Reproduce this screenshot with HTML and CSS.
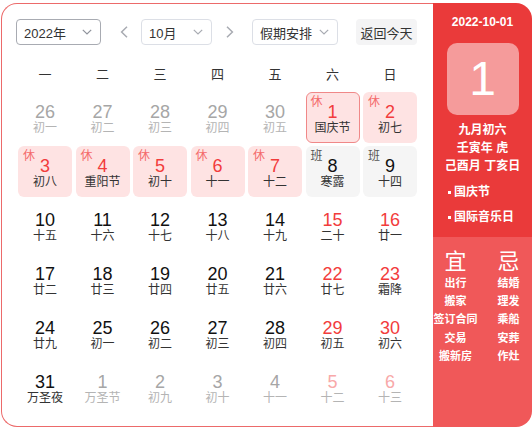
FILE: index.html
```html
<!DOCTYPE html>
<html lang="zh-CN">
<head>
<meta charset="utf-8">
<title>万年历</title>
<link rel="stylesheet" href="styles.css">
</head>
<body>
<div class="cal">
  <div class="main">
    <div class="toolbar">
      <div class="select year"><span>2022年</span><svg width="10" height="6" viewBox="0 0 10 6"><path d="M0.8 0.8L5 5 9.2 0.8" fill="none" stroke="#8f939c" stroke-width="1.2"/></svg></div>
      <div class="nav prev"><svg width="8" height="12" viewBox="0 0 8 12"><path d="M7 0.8L1.6 6 7 11.2" fill="none" stroke="#a8abb2" stroke-width="1.5"/></svg></div>
      <div class="select month"><span>10月</span><svg width="10" height="6" viewBox="0 0 10 6"><path d="M0.8 0.8L5 5 9.2 0.8" fill="none" stroke="#a8abb2" stroke-width="1.2"/></svg></div>
      <div class="nav next"><svg width="8" height="12" viewBox="0 0 8 12"><path d="M1 0.8L6.4 6 1 11.2" fill="none" stroke="#a8abb2" stroke-width="1.5"/></svg></div>
      <div class="select holiday"><span>假期安排</span><svg width="10" height="6" viewBox="0 0 10 6"><path d="M0.8 0.8L5 5 9.2 0.8" fill="none" stroke="#a8abb2" stroke-width="1.2"/></svg></div>
      <div class="btn">返回今天</div>
    </div>
    <div class="weekdays">
      <span>一</span><span>二</span><span>三</span><span>四</span><span>五</span><span>六</span><span>日</span>
    </div>
    <div class="grid">
      <div class="cell other"><span class="num">26</span><span class="lunar">初一</span></div>
      <div class="cell other"><span class="num">27</span><span class="lunar">初二</span></div>
      <div class="cell other"><span class="num">28</span><span class="lunar">初三</span></div>
      <div class="cell other"><span class="num">29</span><span class="lunar">初四</span></div>
      <div class="cell other"><span class="num">30</span><span class="lunar">初五</span></div>
      <div class="cell rest selected"><span class="tag">休</span><span class="num">1</span><span class="lunar">国庆节</span></div>
      <div class="cell rest"><span class="tag">休</span><span class="num">2</span><span class="lunar">初七</span></div>

      <div class="cell rest"><span class="tag">休</span><span class="num">3</span><span class="lunar">初八</span></div>
      <div class="cell rest"><span class="tag">休</span><span class="num">4</span><span class="lunar">重阳节</span></div>
      <div class="cell rest"><span class="tag">休</span><span class="num">5</span><span class="lunar">初十</span></div>
      <div class="cell rest"><span class="tag">休</span><span class="num">6</span><span class="lunar">十一</span></div>
      <div class="cell rest"><span class="tag">休</span><span class="num">7</span><span class="lunar">十二</span></div>
      <div class="cell work"><span class="tag">班</span><span class="num">8</span><span class="lunar">寒露</span></div>
      <div class="cell work"><span class="tag">班</span><span class="num">9</span><span class="lunar">十四</span></div>

      <div class="cell"><span class="num">10</span><span class="lunar">十五</span></div>
      <div class="cell"><span class="num">11</span><span class="lunar">十六</span></div>
      <div class="cell"><span class="num">12</span><span class="lunar">十七</span></div>
      <div class="cell"><span class="num">13</span><span class="lunar">十八</span></div>
      <div class="cell"><span class="num">14</span><span class="lunar">十九</span></div>
      <div class="cell weekend"><span class="num">15</span><span class="lunar">二十</span></div>
      <div class="cell weekend"><span class="num">16</span><span class="lunar">廿一</span></div>

      <div class="cell"><span class="num">17</span><span class="lunar">廿二</span></div>
      <div class="cell"><span class="num">18</span><span class="lunar">廿三</span></div>
      <div class="cell"><span class="num">19</span><span class="lunar">廿四</span></div>
      <div class="cell"><span class="num">20</span><span class="lunar">廿五</span></div>
      <div class="cell"><span class="num">21</span><span class="lunar">廿六</span></div>
      <div class="cell weekend"><span class="num">22</span><span class="lunar">廿七</span></div>
      <div class="cell weekend"><span class="num">23</span><span class="lunar">霜降</span></div>

      <div class="cell"><span class="num">24</span><span class="lunar">廿九</span></div>
      <div class="cell"><span class="num">25</span><span class="lunar">初一</span></div>
      <div class="cell"><span class="num">26</span><span class="lunar">初二</span></div>
      <div class="cell"><span class="num">27</span><span class="lunar">初三</span></div>
      <div class="cell"><span class="num">28</span><span class="lunar">初四</span></div>
      <div class="cell weekend"><span class="num">29</span><span class="lunar">初五</span></div>
      <div class="cell weekend"><span class="num">30</span><span class="lunar">初六</span></div>

      <div class="cell"><span class="num">31</span><span class="lunar">万圣夜</span></div>
      <div class="cell other"><span class="num">1</span><span class="lunar">万圣节</span></div>
      <div class="cell other"><span class="num">2</span><span class="lunar">初九</span></div>
      <div class="cell other"><span class="num">3</span><span class="lunar">初十</span></div>
      <div class="cell other"><span class="num">4</span><span class="lunar">十一</span></div>
      <div class="cell other weekend"><span class="num">5</span><span class="lunar">十二</span></div>
      <div class="cell other weekend"><span class="num">6</span><span class="lunar">十三</span></div>
    </div>
  </div>
  <div class="side">
    <div class="side-top">
      <div class="date">2022-10-01</div>
      <div class="day-box">1</div>
      <div class="lunar-info">
        <div>九月初六</div>
        <div>壬寅年 虎</div>
        <div>己酉月 丁亥日</div>
      </div>
      <ul class="festivals">
        <li>国庆节</li>
        <li>国际音乐日</li>
      </ul>
    </div>
    <div class="side-bottom">
      <div class="col">
        <div class="big">宜</div>
        <div>出行</div>
        <div>搬家</div>
        <div>签订合同</div>
        <div>交易</div>
        <div>搬新房</div>
      </div>
      <div class="col">
        <div class="big">忌</div>
        <div>结婚</div>
        <div>理发</div>
        <div>乘船</div>
        <div>安葬</div>
        <div>作灶</div>
      </div>
    </div>
  </div>
</div>
</body>
</html>
```

FILE: styles.css
```css
body {
  margin: 0;
  padding: 3px 0 0 1px;
  font-family: "Liberation Sans", "Noto Sans CJK SC", sans-serif;
  background: #fff;
}

.cal {
  display: flex;
  width: 531px;
  height: 424px;
}

.main {
  width: 432px;
  box-sizing: border-box;
  border: 1px solid #ec6a6a;
  border-right: none;
  border-radius: 16px 0 0 16px;
  padding: 15px 0 0 14px;
}

.toolbar {
  display: flex;
  align-items: center;
  height: 26px;
}

.select {
  box-sizing: border-box;
  height: 26px;
  border: 1px solid #dcdfe6;
  border-radius: 4px;
  display: flex;
  align-items: center;
  justify-content: space-between;
  padding: 0 8px 0 7px;
  font-size: 13px;
  color: #333;
}

.select.year {
  width: 85px;
  border-color: #a8abb2;
}

.select.month {
  width: 71px;
}

.select.holiday {
  width: 86px;
}

.nav {
  display: flex;
  align-items: center;
  height: 26px;
}

.nav.prev {
  margin: 0 13px 0 19px;
}

.nav.next {
  margin: 0 18px 0 14px;
}

.btn {
  margin-left: 18px;
  width: 61px;
  height: 26px;
  border-radius: 4px;
  background: #f4f4f5;
  color: #333;
  font-size: 13px;
  display: flex;
  align-items: center;
  justify-content: center;
}

.weekdays {
  display: grid;
  grid-template-columns: repeat(7, 54px);
  column-gap: 3.5px;
  margin: 10px 0 0 2px;
  height: 37px;
  align-items: center;
  justify-items: center;
  font-size: 13px;
  color: #333;
}

.grid {
  display: grid;
  grid-template-columns: repeat(7, 54px);
  grid-auto-rows: 51px;
  column-gap: 3.5px;
  row-gap: 3px;
  margin-left: 2px;
}

.cell {
  position: relative;
  box-sizing: border-box;
  border-radius: 6px;
  display: flex;
  flex-direction: column;
  align-items: center;
  padding-top: 10px;
}

.num {
  font-size: 18px;
  line-height: 20px;
  color: #111;
}

.lunar {
  font-size: 12px;
  line-height: 14px;
  margin-top: -1px;
  color: #333;
}

.tag {
  position: absolute;
  left: 5px;
  top: 4px;
  font-size: 12px;
  line-height: 12px;
}

.weekend .num {
  color: #f23c3c;
}

.rest {
  background: #fee3e3;
}

.rest .num {
  color: #f23c3c;
}

.rest .tag {
  color: #f46a6a;
}

.selected {
  border: 1px solid #f08888;
  padding-top: 9px;
}

.selected .tag {
  left: 4px;
  top: 3px;
}

.work {
  background: #f5f5f5;
}

.work .tag {
  color: #555;
}

.other .num {
  color: #a6a6a6;
}

.other .lunar {
  color: #b4b4b4;
}

.other.weekend .num {
  color: #f8a9a9;
}

/* side panel */
.side {
  width: 99px;
  border-radius: 0 16px 16px 0;
  overflow: hidden;
  display: flex;
  flex-direction: column;
  color: #fff;
}

.side-top {
  background: #ea3a3a;
  height: 234px;
  box-sizing: border-box;
  padding-top: 12px;
  display: flex;
  flex-direction: column;
  align-items: center;
}

.date {
  font-size: 12px;
  line-height: 14px;
  font-weight: bold;
}

.day-box {
  margin-top: 14px;
  width: 72px;
  height: 72px;
  border-radius: 10px;
  background: #f59b9b;
  font-size: 48px;
  line-height: 72px;
  text-align: center;
}

.lunar-info {
  margin-top: 6px;
  font-size: 12px;
  line-height: 18px;
  font-weight: bold;
  text-align: center;
}

.festivals {
  list-style: none;
  margin: 5px 0 0 0;
  padding: 0 0 0 14px;
  align-self: stretch;
  font-size: 12px;
  line-height: 25px;
  font-weight: bold;
}

.festivals li {
  display: flex;
  align-items: center;
}

.festivals li::before {
  content: "";
  width: 3px;
  height: 3px;
  background: #fff;
  margin: 0 3px 0 1px;
}

.side-bottom {
  flex: 1;
  background: #f05859;
  display: grid;
  grid-template-columns: 45px 45px;
  column-gap: 8px;
  align-content: start;
  padding-top: 13px;
}

.col {
  display: flex;
  flex-direction: column;
  align-items: center;
  font-size: 11px;
  line-height: 18.2px;
  font-weight: bold;
  white-space: nowrap;
}

.col .big {
  font-size: 22px;
  line-height: 24px;
  font-weight: normal;
}
```
